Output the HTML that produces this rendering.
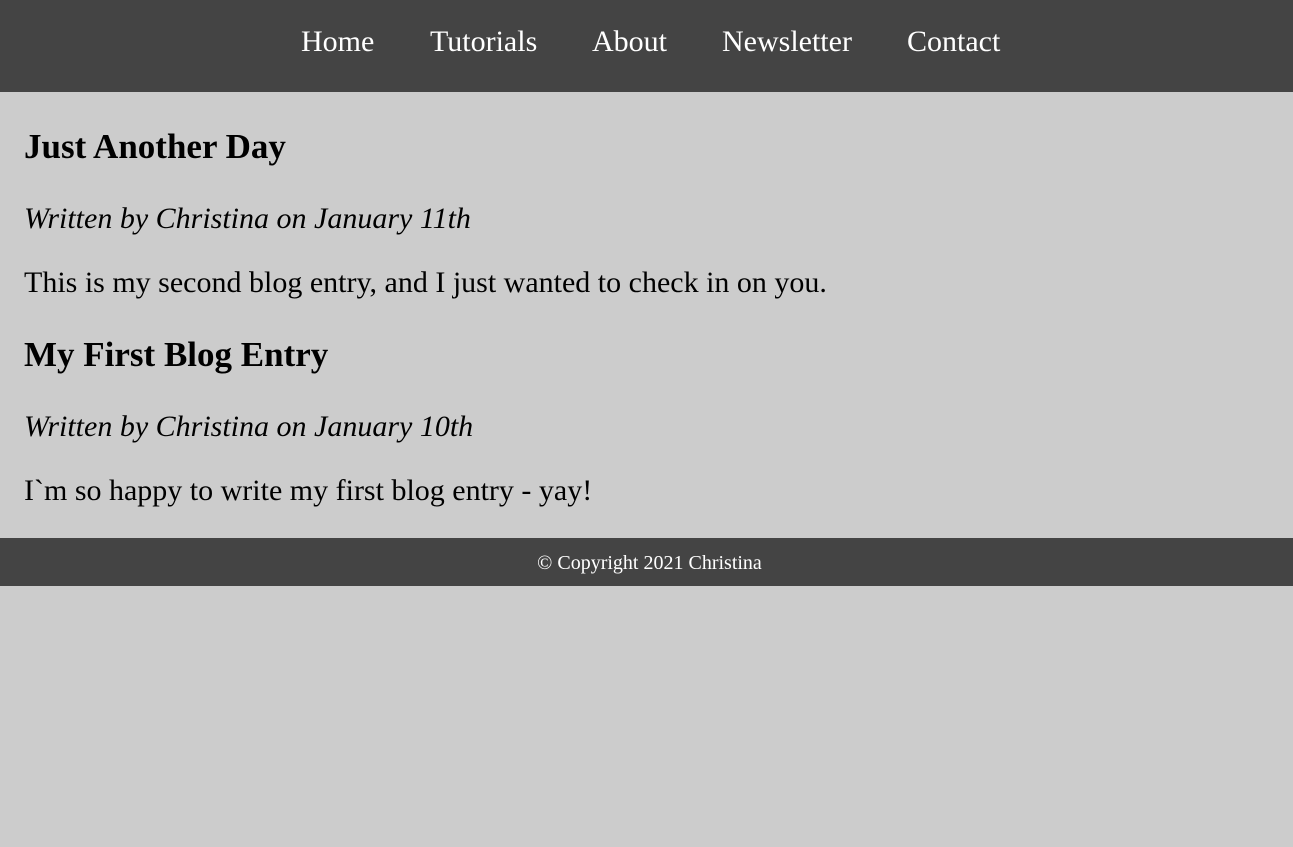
<!DOCTYPE html>
<html><head><style>
html,body{margin:0;padding:0;background:#cccccc;font-family:"Liberation Serif",serif;}
nav{background:#444;height:92px;position:relative;}
nav a{position:absolute;top:24px;color:#fff;font-size:30px;text-decoration:none;line-height:36px;}
h2{font-size:35px;margin:0;position:absolute;line-height:40px;white-space:nowrap;}
.p{position:absolute;font-size:30px;line-height:36px;left:24px;white-space:nowrap;}
i{font-style:italic}
footer{position:absolute;top:538px;left:0;width:1293px;height:48px;background:#444;color:#fff;font-size:20px;text-align:center;line-height:50px;}
footer span{position:relative;left:3px;}
</style></head><body>
<nav>
<a style="left:301px">Home</a>
<a style="left:430px">Tutorials</a>
<a style="left:592px">About</a>
<a style="left:722px">Newsletter</a>
<a style="left:907px">Contact</a>
</nav>
<h2 style="left:24px;top:127px">Just Another Day</h2>
<div class="p" style="top:201px"><i>Written by Christina on January 11th</i></div>
<div class="p" style="top:265px">This is my second blog entry, and I just wanted to check in on you.</div>
<h2 style="left:24px;top:335px">My First Blog Entry</h2>
<div class="p" style="top:409px"><i>Written by Christina on January 10th</i></div>
<div class="p" style="top:473px">I`m so happy to write my first blog entry - yay!</div>
<footer><span>© Copyright 2021 Christina</span></footer>
</body></html>
